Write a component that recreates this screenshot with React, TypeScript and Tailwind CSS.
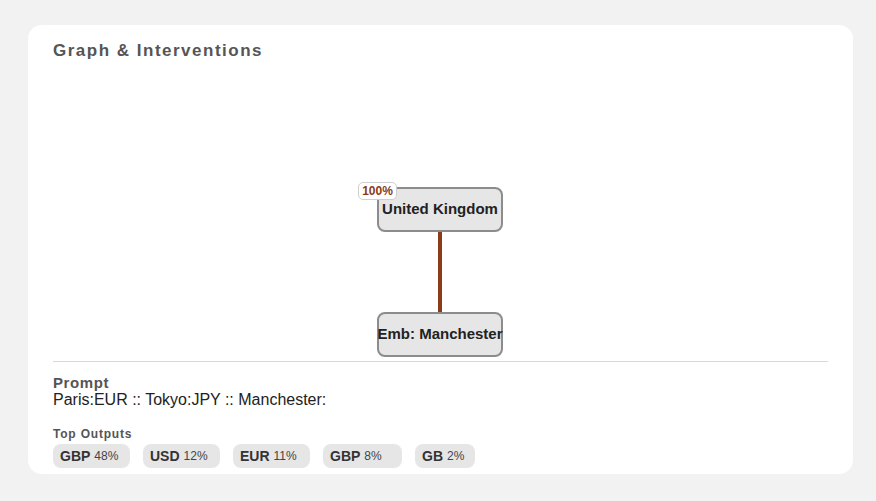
import React from "react";

type Output = { token: string; pct: string; w: string };

const outputs: Output[] = [
  { token: "GBP", pct: "48%", w: "w-[77px]" },
  { token: "USD", pct: "12%", w: "w-[77px]" },
  { token: "EUR", pct: "11%", w: "w-[77px]" },
  { token: "GBP", pct: "8%", w: "w-[79px]" },
  { token: "GB", pct: "2%", w: "w-[60px]" },
];

function GraphNode({ label, top }: { label: string; top: string }) {
  return (
    <div
      className={`absolute left-[324px] ${top} flex h-[45px] w-[126px] items-center justify-center overflow-visible whitespace-nowrap rounded-[8px] border-2 border-[#8c8c8c] bg-[#e6e6e6] text-[15px] font-bold text-[#222]`}
    >
      {label}
    </div>
  );
}

export default function App() {
  return (
    <div
      className="h-[501px] w-[876px] bg-[#f2f2f2] pl-[28px] pr-[23px] pt-[25px]"
      style={{ fontFamily: '"Liberation Sans", Arial, sans-serif' }}
    >
      <div className="flex h-[449px] flex-col rounded-[14px] bg-white px-[25px] pt-[14px]">
        <h1 className="text-[17px] font-bold leading-[24px] tracking-[1.5px] text-[#555]">
          Graph &amp; Interventions
        </h1>

        {/* causal graph canvas */}
        <div className="relative h-[298px] w-full">
          <div className="absolute left-[385px] top-[169px] h-[80px] w-[4px] bg-[#8a3b17]" />
          <GraphNode label="United Kingdom" top="top-[124px]" />
          <GraphNode label="Emb: Manchester" top="top-[249px]" />
          <div className="absolute left-[305px] top-[119px] flex h-[18px] w-[39px] items-center justify-center rounded-[5px] border border-[#cfcfcf] bg-white text-[12px] font-bold text-[#8a3b17]">
            100%
          </div>
        </div>

        <div className="border-t border-[#d9d9d9]" />

        <div className="mt-[12px] text-[15px] font-bold leading-[17px] tracking-[0.6px] text-[#555]">
          Prompt
        </div>
        <div className="text-[16px] leading-[17px] text-[#222]">
          Paris:EUR :: Tokyo:JPY :: Manchester:
        </div>

        <div className="mt-[19px] text-[12px] font-bold leading-[14px] tracking-[0.8px] text-[#555]">
          Top Outputs
        </div>
        <div className="mt-[3px] flex gap-[13px]">
          {outputs.map((o, i) => (
            <div
              key={i}
              className={`${o.w} flex h-[24px] items-center rounded-[8px] bg-[#e6e6e6] pl-[7px] whitespace-nowrap text-[#333]`}
            >
              <span className="text-[14px] font-bold">{o.token}</span>
              <span className="ml-[4px] text-[12px] text-[#444]">{o.pct}</span>
            </div>
          ))}
        </div>
      </div>
    </div>
  );
}
